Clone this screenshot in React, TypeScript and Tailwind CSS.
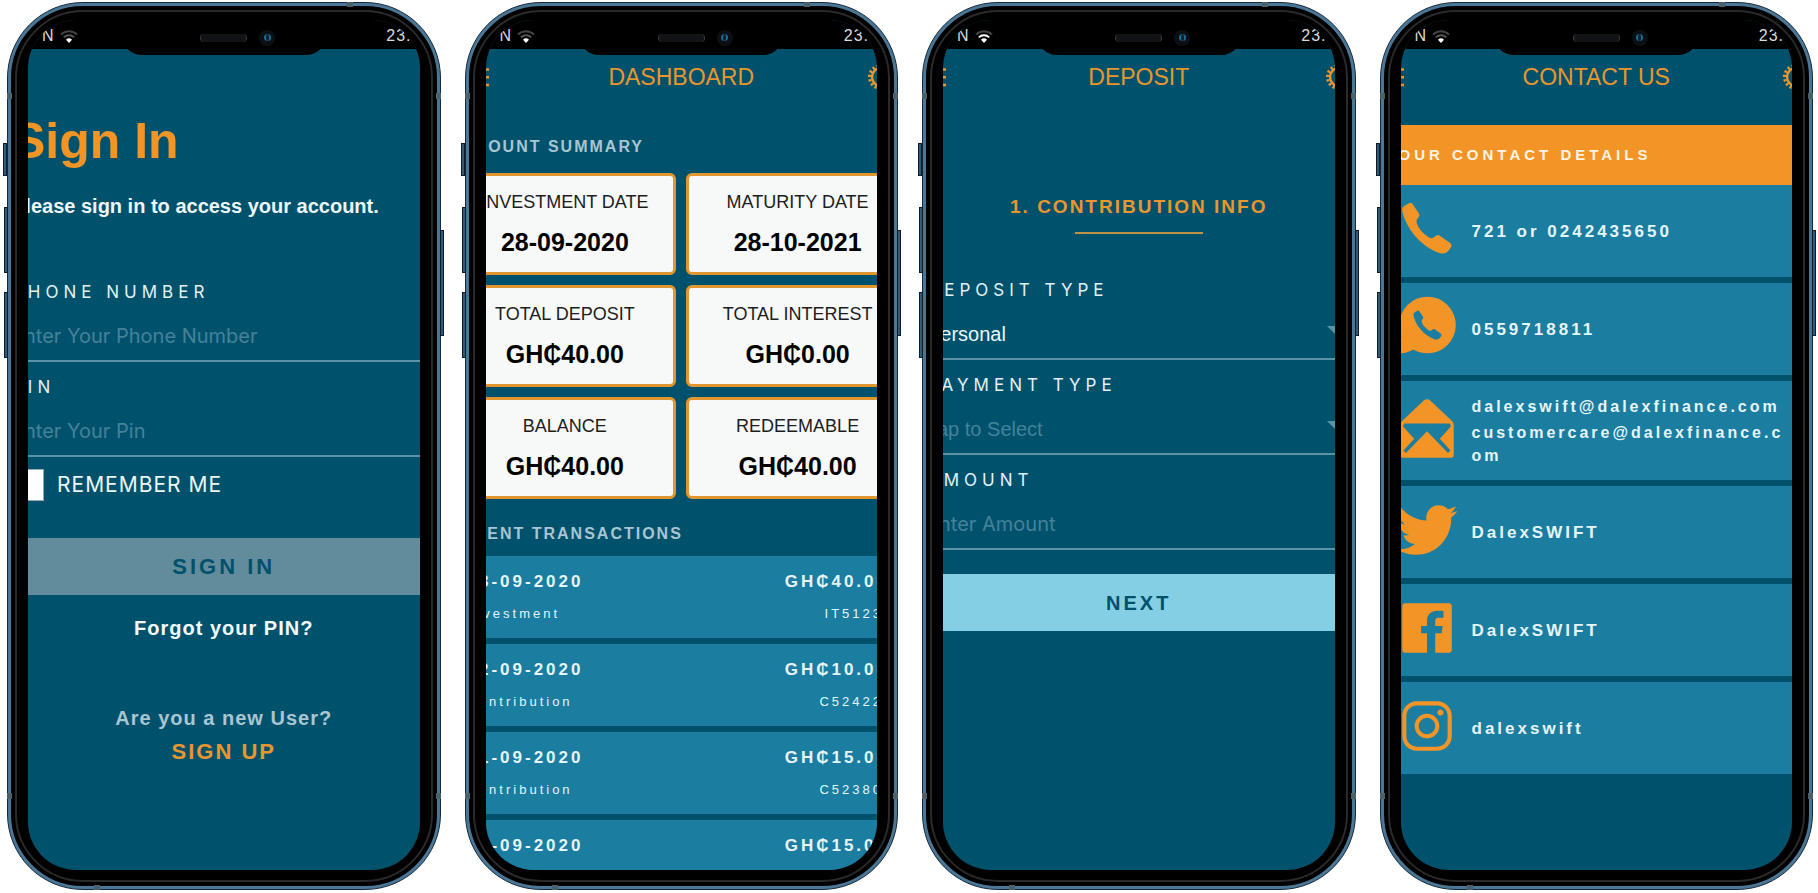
import type { ReactNode } from "react";
import { IoLogoFacebook, IoLogoInstagram, IoLogoTwitter } from "react-icons/io";

const helvetica = "font-['Liberation_Sans',Arial,sans-serif]";
const inter = "font-[Inter,'Liberation_Sans',sans-serif]";

const handset =
  "M3 8.5Q3 6 6 4.5L10 2.2Q12 1 13.5 3L20 12.5Q21 14.2 19.7 16Q17 19 17.5 21.5Q20 30 30 36.5Q32.5 38 35 36.2Q38 33.5 40 34.2L51.5 42.3Q53.3 43.8 52.3 45.8Q50 50 47.5 51.5Q44 53.3 39 51.5C22 45 6 27 3 8.5z";

function PhoneIcon() {
  return (
    <svg viewBox="0 0 56 56" className="size-14" fill="currentColor" aria-hidden="true">
      <path d={handset} />
    </svg>
  );
}

function WhatsAppIcon() {
  return (
    <svg viewBox="0 0 56 56" className="size-14 overflow-visible" fill="currentColor" aria-hidden="true">
      <circle cx="28.5" cy="26" r="28.3" />
      <path d="M0 35Q4.500 46-3 54Q7 55.500 15 50z" />
      <path d={handset} transform="translate(12.600 10.600) scale(.57)" fill="#1b7da0" />
    </svg>
  );
}

function MailIcon() {
  return (
    <svg viewBox="0 0 56 56" className="size-14 overflow-visible" aria-hidden="true">
      <path
        d="M24.500-.3Q28-3.200 31.500-.3L53 20Q54.700 21.700 54.700 24V54Q54.700 56.700 52 56.700H4Q1.300 56.700 1.300 54V24Q1.300 21.700 3 20z"
        fill="currentColor"
      />
      <path d="M5.500 22.500H50.500Q52.500 24 51.500 26L40.800 37.800L51.500 49.500L49 52L28 30.300L7 52L4.500 49.500L15.200 37.800L4.500 26Q3.500 24 5.500 22.500z" fill="#1b7da0" />
    </svg>
  );
}

function Wifi({ strong }: { strong?: boolean }) {
  return (
    <svg viewBox="0 0 18 13" className="h-[13px] w-[18px]" fill="none" aria-hidden="true">
      <path d="M1 4.6a11.5 11.5 0 0 1 16 0" stroke="#444" strokeWidth="2" />
      <path d="M3.8 7.4a7.5 7.5 0 0 1 10.4 0" stroke={strong ? "#fff" : "#555"} strokeWidth="2" />
      <path d="M6 9.8a4.3 4.3 0 0 1 6 0L9 13z" fill="#fff" />
    </svg>
  );
}

function SideKey({ className }: { className: string }) {
  return <span className={`absolute w-1 border border-[#0d1c2a] bg-[#355a78] ${className}`} />;
}

function Phone({ children, strongSignal }: { children: ReactNode; strongSignal?: boolean }) {
  return (
    <section className="relative">
      <SideKey className="-left-1 top-[141px] h-[33px]" />
      <SideKey className="-left-[3px] top-[205px] h-[66px]" />
      <SideKey className="-left-[3px] top-[290px] h-[66px]" />
      <SideKey className="-right-[3px] top-[228px] h-[106px]" />
      <div className="rounded-[76px] border border-[#16293a] bg-[#4a7796] p-[3px]">
        <div className="rounded-[72px] border-2 border-black bg-black p-[2px]">
          <div className="rounded-[68px] border-2 border-[#2a2a2a] bg-black px-[11px] pt-[8px] pb-[10px]">
            <div className="relative flex h-[850px] flex-col overflow-hidden rounded-[48px] bg-[#00526c]">
              <div className="flex h-[29px] shrink-0 items-center justify-between bg-black pr-2 pl-[14px] text-[16px] leading-4 text-[#dcdcdc]">
                <div className={`flex items-center gap-[6px] pt-[3px] ${helvetica}`}>
                  <span>N</span>
                  <Wifi strong={strongSignal} />
                </div>
                <span className={`pt-[3px] tracking-[1px] ${helvetica}`}>23.</span>
              </div>
              <div className="absolute top-0 left-1/2 flex h-[35px] w-[204px] -translate-x-1/2 items-center justify-center gap-3 rounded-b-[20px] bg-black pl-7">
                <span className="h-2 w-[47px] rounded-full border-x border-[#3a3a3a] bg-[#121316]" />
                <span className="flex size-4 items-center justify-center rounded-full bg-[#0c0f13]">
                  <span className="size-[7px] rounded-full border-x-2 border-[#1c6c94] bg-[#0b2233]" />
                </span>
              </div>
              <div className="-mx-9 flex-1">{children}</div>
            </div>
          </div>
        </div>
      </div>
      <span className="absolute top-[91px] left-0 h-[6px] w-[5px] bg-[#4b6069]" />
      <span className="absolute top-[91px] right-0 h-[6px] w-[5px] bg-[#4b6069]" />
      <span className="absolute bottom-[91px] left-0 h-[6px] w-[5px] bg-[#4b6069]" />
      <span className="absolute right-0 bottom-[91px] h-[6px] w-[5px] bg-[#4b6069]" />
      <span className="absolute top-0 right-[88px] h-[5px] w-[6px] bg-[#4b6069]" />
      <span className="absolute bottom-0 left-[87px] h-[5px] w-[6px] bg-[#4b6069]" />
    </section>
  );
}

function AppBar({ title }: { title: string }) {
  return (
    <header className="grid h-[54px] grid-cols-[46px_1fr_46px] items-center pt-[2px] text-[#e8962d]">
      <button aria-label="Menu" className="pl-3">
        <svg viewBox="0 0 28 20" className="h-5 w-7" stroke="currentColor" strokeWidth="2.6" aria-hidden="true">
          <path d="M0 2.500h27M0 10.200h27M0 18h27" />
        </svg>
      </button>
      <h2 className={`text-center text-[23px] leading-7 ${helvetica}`}>{title}</h2>
      <button aria-label="Settings">
        <svg viewBox="0 0 28 28" className="size-7" fill="none" stroke="currentColor" aria-hidden="true">
          <circle cx="14" cy="14" r="9" strokeWidth="2.400" />
          <circle cx="14" cy="14" r="11.500" strokeWidth="3" pathLength="32" strokeDasharray="1" />
        </svg>
      </button>
    </header>
  );
}

const fieldBox = "mt-[10px] h-11 w-full appearance-none bg-transparent text-[20px] outline-none placeholder:text-[#46819a]";

function FieldFrame({ id, label, children }: { id: string; label: string; children: ReactNode }) {
  return (
    <div className="relative h-[95px] border-b-2 border-[#5b93a6] px-5 pt-[13px]">
      <label htmlFor={id} className={`block text-[17px] leading-6 tracking-[5px] text-[#e3f1f5] ${inter}`}>
        {label}
      </label>
      {children}
    </div>
  );
}

function TextField({ id, label, hint, type = "text" }: { id: string; label: string; hint: string; type?: string }) {
  return (
    <FieldFrame id={id} label={label}>
      <input id={id} type={type} placeholder={hint} className={`${fieldBox} ${inter}`} />
    </FieldFrame>
  );
}

function SelectField({ id, label, value, muted }: { id: string; label: string; value: string; muted?: boolean }) {
  return (
    <FieldFrame id={id} label={label}>
      <select id={id} className={`${fieldBox} ${helvetica} ${muted ? "text-[#46819a]" : "text-[#eef7fa]"}`}>
        <option>{value}</option>
      </select>
      <svg viewBox="0 0 16 8" className="pointer-events-none absolute right-7 bottom-6 h-2 w-4" fill="#5b93a6" aria-hidden="true">
        <path d="M0 0h16L8 8z" />
      </svg>
    </FieldFrame>
  );
}

function SignIn() {
  return (
    <form className={`flex flex-col ${helvetica}`}>
      <div className="px-5 pt-[62px]">
        <h1 className="text-[50px] leading-[60px] font-bold text-[#f29526]">Sign In</h1>
        <p className="pt-[23px] text-[20px] leading-6 font-bold text-[#eef7fa]">Please sign in to access your account.</p>
      </div>
      <div className="pt-[49px]">
        <TextField id="phone" label="PHONE NUMBER" hint="Enter Your Phone Number" />
        <TextField id="pin" label="PIN" hint="Enter Your Pin" type="password" />
      </div>
      <div className="flex items-center gap-[13px] px-5 pt-3">
        <input id="remember" type="checkbox" className="size-8 appearance-none border border-[#9aa9ae] bg-white" />
        <label htmlFor="remember" className={`text-[21px] leading-6 tracking-[1px] text-[#eef7fa] ${inter}`}>
          REMEMBER ME
        </label>
      </div>
      <button type="button" className="mt-[37px] h-[57px] bg-[#628b9b] text-[22px] font-bold tracking-[3px] text-[#00526c]">
        SIGN IN
      </button>
      <a href="#forgot" className="pt-[21px] text-center text-[20px] leading-6 font-bold tracking-[1px] text-[#f3fafc]">
        Forgot your PIN?
      </a>
      <p className="pt-[66px] text-center text-[20px] leading-6 font-bold tracking-[1px] text-[#a9c5d2]">Are you a new User?</p>
      <a href="#signup" className="pt-2 text-center text-[22px] leading-7 font-bold tracking-[2px] text-[#e8962d]">
        SIGN UP
      </a>
    </form>
  );
}

const summary = [
  ["INVESTMENT DATE", "28-09-2020"],
  ["MATURITY DATE", "28-10-2021"],
  ["TOTAL DEPOSIT", "GH₵40.00"],
  ["TOTAL INTEREST", "GH₵0.00"],
  ["BALANCE", "GH₵40.00"],
  ["REDEEMABLE", "GH₵40.00"],
];

const transactions = [
  ["28-09-2020", "GH₵40.00", "Investment", "IT5123"],
  ["22-09-2020", "GH₵10.00", "Contribution", "C52422"],
  ["21-09-2020", "GH₵15.00", "Contribution", "C52380"],
  ["21-09-2020", "GH₵15.00", "", ""],
];

const sectionTitle = "-ml-[2px] text-[16px] leading-6 font-bold tracking-[2px] text-[#a9c5d2]";

function Dashboard() {
  return (
    <div className={helvetica}>
      <AppBar title="DASHBOARD" />
      <h3 className={`pt-8 ${sectionTitle}`}>ACCOUNT SUMMARY</h3>
      <dl className="grid grid-cols-2 gap-[10px] px-1 pt-[14px]">
        {summary.map(([name, value]) => (
          <div key={name} className="h-[102px] rounded-md border-3 border-[#e0962f] bg-[#f7f8f8] pt-[14px] text-center">
            <dt className="text-[18px] leading-6 text-[#1d1d1d]">{name}</dt>
            <dd className="pt-[14px] text-[25px] leading-7 font-bold text-black">{value}</dd>
          </div>
        ))}
      </dl>
      <h3 className={`pt-[23px] pb-[10px] ${sectionTitle}`}>RECENT TRANSACTIONS</h3>
      <ul className="flex flex-col gap-[6px]">
        {transactions.map(([date, amount, kind, code], i) => (
          <li key={i} className="h-[82px] bg-[#1b7da0] pt-[14px] pr-6 pl-[17px] text-[#e6f5f9]">
            <div className="flex justify-between text-[17px] leading-6 font-bold tracking-[3px]">
              <span>{date}</span>
              <span>{amount}</span>
            </div>
            <div className="flex justify-between pt-[10px] pr-[6px] text-[13px] leading-5 tracking-[3px]">
              <span>{kind}</span>
              <span>{code}</span>
            </div>
          </li>
        ))}
      </ul>
    </div>
  );
}

function Deposit() {
  return (
    <form className={`flex flex-col ${helvetica}`}>
      <AppBar title="DEPOSIT" />
      <h3 className="pt-[92px] text-center text-[19px] leading-6 font-bold tracking-[2px] text-[#e8962d]">1. CONTRIBUTION INFO</h3>
      <hr className="mx-auto mt-[13px] w-32 border-t-2 border-[#bd9448]" />
      <div className="pt-[31px]">
        <SelectField id="deposit-type" label="DEPOSIT TYPE" value="Personal" />
        <SelectField id="payment-type" label="PAYMENT TYPE" value="Tap to Select" muted />
        <TextField id="amount" label="AMOUNT" hint="Enter Amount" />
      </div>
      <button type="button" className="mt-6 h-[57px] bg-[#84cfe3] text-[20px] font-bold tracking-[3px] text-[#00526c]">
        NEXT
      </button>
    </form>
  );
}

const contacts = [
  { icon: <PhoneIcon />, label: "Phone", text: "text-[17px]", lines: ["721 or 0242435650"] },
  { icon: <WhatsAppIcon />, label: "WhatsApp", text: "text-[17px]", lines: ["0559718811"] },
  {
    icon: <MailIcon />,
    label: "Email",
    text: "text-[16px]",
    lines: ["dalexswift@dalexfinance.com", "customercare@dalexfinance.com"],
  },
  { icon: <IoLogoTwitter className="size-[66px] shrink-0" />, label: "Twitter", text: "text-[17px]", lines: ["DalexSWIFT"] },
  { icon: <IoLogoFacebook className="size-[66px] shrink-0" />, label: "Facebook", text: "text-[17px]", lines: ["DalexSWIFT"] },
  { icon: <IoLogoInstagram className="size-[66px] shrink-0" />, label: "Instagram", text: "text-[17px]", lines: ["dalexswift"] },
];

function Contact() {
  return (
    <div className={helvetica}>
      <AppBar title="CONTACT US" />
      <h3 className="mt-[22px] flex h-[60px] items-center bg-[#f29526] pl-5 text-[15px] font-bold tracking-[4px] text-[#fdf3e4]">
        YOUR CONTACT DETAILS
      </h3>
      <ul className="flex flex-col gap-[6px]">
        {contacts.map(({ icon, label, text, lines }) => (
          <li key={label} className="flex min-h-[92px] items-center gap-[17px] bg-[#1b7da0] py-[13px] pr-9 pl-[34px]">
            <span className="-mt-1 flex size-14 shrink-0 items-center justify-center text-[#f29526]" role="img" aria-label={label}>
              {icon}
            </span>
            <div className={`flex min-w-0 flex-col gap-[3px] pt-px leading-[23px] font-bold tracking-[3px] text-[#e6f5f9] ${text}`}>
              {lines.map((line) => (
                <p key={line} className="break-all">
                  {line}
                </p>
              ))}
            </div>
          </li>
        ))}
      </ul>
    </div>
  );
}

export default function App() {
  return (
    <main className="grid min-h-screen grid-cols-4 items-start gap-6 bg-white pt-[2px] pr-[5px] pl-[7px]">
      <Phone>
        <SignIn />
      </Phone>
      <Phone>
        <Dashboard />
      </Phone>
      <Phone strongSignal>
        <Deposit />
      </Phone>
      <Phone>
        <Contact />
      </Phone>
    </main>
  );
}
